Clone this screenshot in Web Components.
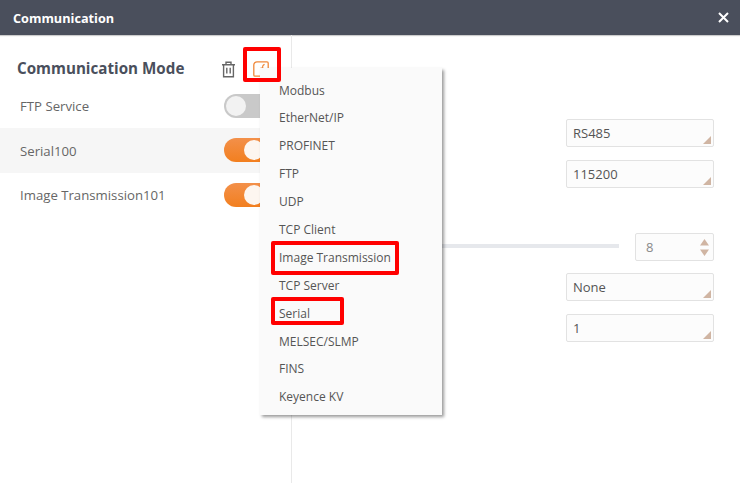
<!DOCTYPE html>
<html>
<head>
<meta charset="utf-8">
<style>
  html, body { margin: 0; height: 100%; }
  body { font-family: "Open Sans", "Noto Sans", sans-serif; color: #555; background: #fff; overflow: hidden; }
</style>
</head>
<body>
<comm-dialog heading="Communication">
  <mode-list slot="left" heading="Communication Mode">
    <mode-row label="FTP Service"></mode-row>
    <mode-row label="Serial100" on selected></mode-row>
    <mode-row label="Image Transmission101" on></mode-row>
  </mode-list>
  <settings-pane slot="right">
    <select-box value="RS485" style="margin-top:84px"></select-box>
    <select-box value="115200" style="margin-top:13px"></select-box>
    <slider-row value="8" style="margin-top:45px"></slider-row>
    <select-box value="None" style="margin-top:12px"></select-box>
    <select-box value="1" style="margin-top:13px"></select-box>
  </settings-pane>
  <add-menu slot="overlay"></add-menu>
</comm-dialog>

<script>
class CommDialog extends HTMLElement {
  constructor() {
    super();
    this.attachShadow({ mode: "open" });
    this.shadowRoot.innerHTML = `
      <style>
        :host { display: flex; flex-direction: column; width: 740px; height: 483px; position: relative; overflow: hidden; }
        header { flex: none; height: 35px; background: #4a4f5c; color: #fff; display: flex; align-items: center;
          justify-content: space-between; padding: 0 10px 0 13px; font-size: 12.7px; font-weight: 700; box-shadow: 0 1px 1px #ccc; }
        svg { display: block; }
        main { flex: 1; display: flex; min-height: 0; }
        .left { flex: none; width: 291px; border-right: 1px solid #e9e9e9; }
        .right { flex: 1; }
      </style>
      <header><span>${this.getAttribute("heading")}</span>
        <svg width="13" height="13" viewBox="0 0 13 13"><path d="M2 2l9 9M11 2l-9 9" stroke="#fff" stroke-width="2" fill="none"/></svg>
      </header>
      <main>
        <div class="left"><slot name="left"></slot></div>
        <div class="right"><slot name="right"></slot></div>
      </main>
      <slot name="overlay"></slot>`;
  }
}

class ModeList extends HTMLElement {
  constructor() {
    super();
    this.attachShadow({ mode: "open" });
    this.shadowRoot.innerHTML = `
      <style>
        :host { display: block; }
        .top { height: 48.5px; display: flex; align-items: flex-end; padding: 0 0 0 17px; }
        h2 { margin: 0 0 5.5px; font-size: 15.2px; font-weight: 700; color: #4a4f5c; line-height: 20px; flex: 1; }
        .icons { display: flex; gap: 17px; padding: 0 22px 6px 0; align-items: center; }
        svg { display: block; }
      </style>
      <div class="top">
        <h2>${this.getAttribute("heading")}</h2>
        <div class="icons">
          <svg width="15" height="17" viewBox="0 0 15 17" fill="none" stroke="#666" stroke-width="1.4">
            <path d="M1 3.7h13M5 3.5V1.2h5v2.3M2.6 3.7v12h9.8v-12M5.8 6.8v5.6M9.2 6.8v5.6"/>
          </svg>
          <svg width="16" height="16" viewBox="0 0 16 16" fill="none" stroke="#f0883a" stroke-width="1.3">
            <path d="M4 .8h10a1.2 1.2 0 0 1 1.2 1.2v8M4 .8A3.2 3.2 0 0 0 .8 4v10a1.2 1.2 0 0 0 1.2 1.2h8"/>
            <path d="M7.5 7.2h2.2V4.8M9.7 4.8l1.8-1.6" stroke-width="1.2"/>
          </svg>
        </div>
      </div>
      <slot></slot>`;
  }
}

class ModeRow extends HTMLElement {
  constructor() {
    super();
    this.attachShadow({ mode: "open" });
    const on = this.hasAttribute("on");
    this.shadowRoot.innerHTML = `
      <style>
        :host { display: flex; align-items: center; height: 44.5px; padding: 0 0 0 20px; font-size: 13.2px; color: #666; }
        :host([selected]) { background: #f6f6f6; }
        :host([selected]) span { padding-top: 1px; }
        span { flex: 1; }
        .sw { width: 48px; height: 24px; box-sizing: border-box; border-radius: 12px; position: relative; margin-right: 19px;
          background: ${on ? "linear-gradient(#f3904a,#f27f1f)" : "#c9c9c9"}; }
        .sw i { position: absolute; top: 2px; width: 20px; height: 20px; border-radius: 50%; background: ${on ? "#fdf6f0" : "#f2f2f2"};
          left: ${on ? "20px" : "2px"}; }
      </style>
      <span>${this.getAttribute("label")}</span>
      <div class="sw"><i></i></div>`;
  }
}

class SettingsPane extends HTMLElement {
  constructor() {
    super();
    this.attachShadow({ mode: "open" });
    this.shadowRoot.innerHTML = `
      <style>:host { display: flex; flex-direction: column; align-items: flex-end; padding-right: 26px; }</style>
      <slot></slot>`;
  }
}

const corner = `<svg width="8" height="8" viewBox="0 0 8 8"><path d="M8 0v8H0z" fill="#d0b5a3"/></svg>`;

class SelectBox extends HTMLElement {
  constructor() {
    super();
    this.attachShadow({ mode: "open" });
    this.shadowRoot.innerHTML = `
      <style>
        :host { display: flex; align-items: center; width: 148px; height: 28px; box-sizing: border-box; border: 1px solid #e2e2e2;
          border-radius: 2px; background: #fcfcfc; padding: 0 0 1px 6px; font-size: 13px; color: #555; position: relative; }
        svg { position: absolute; right: 2px; bottom: 2px; }
      </style>
      <span>${this.getAttribute("value")}</span>${corner}`;
  }
}

class SliderRow extends HTMLElement {
  constructor() {
    super();
    this.attachShadow({ mode: "open" });
    this.shadowRoot.innerHTML = `
      <style>
        :host { display: flex; align-items: center; gap: 16px; width: 272px; }
        .track { flex: 1; height: 4px; background: #e6e8ec; margin-top: -3px; }
        .spin { flex: none; width: 79px; height: 28px; box-sizing: border-box; border: 1px solid #e2e2e2; border-radius: 2px;
          background: #fcfcfc; display: flex; align-items: center; justify-content: space-between; padding: 0 4px 0 10px;
          font-size: 13px; color: #8a8a8a; }
        svg { display: block; }
      </style>
      <div class="track"></div>
      <div class="spin"><span>${this.getAttribute("value")}</span>
        <svg width="9" height="17" viewBox="0 0 9 17" fill="#d0b5a3"><path d="M4.5 0L9 6.5H0zM0 10.5h9L4.5 17z"/></svg>
      </div>`;
  }
}

class AddMenu extends HTMLElement {
  constructor() {
    super();
    this.attachShadow({ mode: "open" });
    const items = ["Modbus", "EtherNet/IP", "PROFINET", "FTP", "UDP", "TCP Client", "Image Transmission", "TCP Server", "Serial", "MELSEC/SLMP", "FINS", "Keyence KV"];
    this.shadowRoot.innerHTML = `
      <style>
        :host { position: absolute; left: 260px; top: 68px; width: 182px; height: 347px; box-sizing: border-box; background: #fafafa;
          box-shadow: 2px 2px 3px rgba(0,0,0,.4); padding: 8.5px 0 0 19px; font-size: 12px; color: #555; }
        div { height: 27.9px; line-height: 28px; white-space: nowrap; }
      </style>
      ${items.map((t) => `<div>${t}</div>`).join("")}`;
  }
}

class RedMark extends HTMLElement {
  constructor() {
    super();
    this.attachShadow({ mode: "open" });
    this.shadowRoot.innerHTML = `
      <style>:host { display: block; position: absolute; box-sizing: border-box; border: 4px solid #f00; border-radius: 2px; }</style>`;
  }
}

customElements.define("comm-dialog", CommDialog);
customElements.define("mode-list", ModeList);
customElements.define("mode-row", ModeRow);
customElements.define("settings-pane", SettingsPane);
customElements.define("select-box", SelectBox);
customElements.define("slider-row", SliderRow);
customElements.define("add-menu", AddMenu);
customElements.define("red-mark", RedMark);

// annotation boxes drawn over the screenshot
const dialog = document.querySelector("comm-dialog");
[[243, 47, 38, 35], [271, 241, 128, 34], [271, 297, 73, 28]].forEach(([x, y, w, h]) => {
  const m = document.createElement("red-mark");
  m.slot = "overlay";
  m.style.cssText = `left:${x}px;top:${y}px;width:${w}px;height:${h}px`;
  dialog.appendChild(m);
});
</script>
</body>
</html>
